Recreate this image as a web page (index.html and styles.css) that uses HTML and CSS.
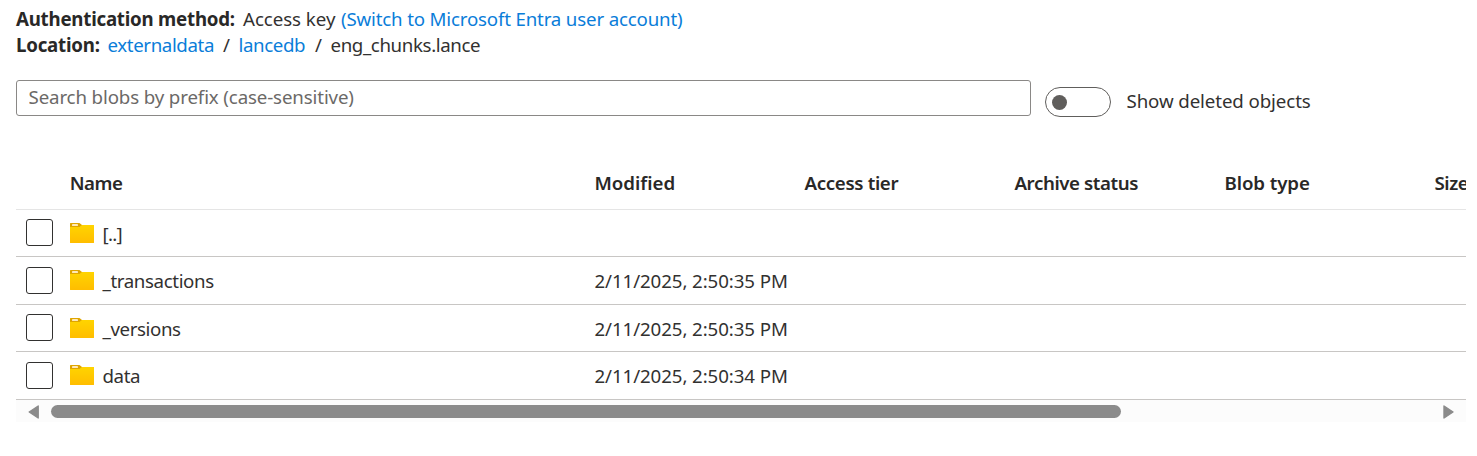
FILE: index.html
```html
<!DOCTYPE html>
<html lang="en">
<head>
<meta charset="utf-8">
<title>eng_chunks.lance</title>
<link rel="stylesheet" href="styles.css">
</head>
<body>
<svg class="defs" width="0" height="0">
  <defs>
    <linearGradient id="folder-fill" x1="0" y1="0" x2="0" y2="1"><stop offset="0" stop-color="#ffd400"/><stop offset="1" stop-color="#ffbd00"/></linearGradient>
    <symbol id="folder" viewBox="0 0 24 20">
      <path d="M0 .6Q0 0 .6 0H9.2Q10 0 10.4.7L12 2V3L10 4.5H0Z" fill="#dfa500"/>
      <path d="M0 4H9.5L12 2H24V19.4Q24 20 23.4 20H.6Q0 20 0 19.4Z" fill="url(#folder-fill)"/>
      <rect x="2" y="1" width="6" height="2" rx=".4" fill="#ffe9b8"/>
    </symbol>
  </defs>
</svg>
<main class="page">
  <section class="context">
    <div class="line"><b class="label auth">Authentication method:</b><span class="access">Access key</span><a class="link switch">(Switch to Microsoft Entra user account)</a></div>
    <div class="line"><b class="label loc">Location:</b><a class="link container">externaldata</a><span class="sep">/</span><a class="link folder-link">lancedb</a><span class="sep">/</span><span class="current">eng_chunks.lance</span></div>
  </section>
  <div class="tools">
    <input class="search" type="text" placeholder="Search blobs by prefix (case-sensitive)">
    <span class="toggle"><span class="knob"></span></span>
    <span class="toggle-label">Show deleted objects</span>
  </div>
  <div class="grid">
    <div class="row head"><span></span><span>Name</span><span class="modified">Modified</span><span class="tier">Access tier</span><span>Archive status</span><span class="type">Blob type</span><span>Size</span></div>
    <div class="row"><span class="check"></span><span class="name"><svg class="icon"><use href="#folder"/></svg><span class="up">[..]</span></span></div>
    <div class="row tall"><span class="check"></span><span class="name"><svg class="icon"><use href="#folder"/></svg><span>_transactions</span></span><span class="date">2/11/2025, 2:50:35 PM</span></div>
    <div class="row"><span class="check"></span><span class="name"><svg class="icon"><use href="#folder"/></svg><span>_versions</span></span><span class="date">2/11/2025, 2:50:35 PM</span></div>
    <div class="row tall"><span class="check"></span><span class="name"><svg class="icon"><use href="#folder"/></svg><span>data</span></span><span class="date">2/11/2025, 2:50:34 PM</span></div>
    <div class="scrollbar">
      <svg class="arrow" viewBox="0 0 12 14"><path d="M10.2 1V13L1.2 7Z"/></svg>
      <span class="track"><span class="thumb"></span></span>
      <svg class="arrow" viewBox="0 0 12 14"><path d="M1 1V13L10 7Z"/></svg>
    </div>
  </div>
</main>
</body>
</html>
```
FILE: styles.css
```css
* { box-sizing: border-box; }
body { margin: 0; background: #fff; color: #323130; font: 18.7px/26px "Noto Sans", sans-serif; letter-spacing: -0.38px; overflow: hidden; }
.defs { display: block; }
.page { width: 1466px; padding: 6px 0 0 16px; }
.line { display: flex; height: 26px; white-space: pre; }
.label { color: #292827; font-weight: 700; margin-right: 8px; letter-spacing: -0.23px; }
.auth { width: 219px; }
.access { width: 98px; letter-spacing: -0.05px; }
.switch { letter-spacing: -0.17px; }
.loc { width: 83.5px; }
.container { width: 106.5px; }
.folder-link { width: 67.5px; }
.sep { width: 24.5px; text-align: center; }
.link { color: #0a7dd9; }
.tools { display: flex; height: 37px; margin-top: 22px; }
.search { width: 1015px; height: 36px; padding: 0 11.5px 4px; border: 1px solid #8a8886; border-radius: 3px; font: inherit; letter-spacing: -0.13px; outline: 0; }
.search::placeholder { color: #6b6967; opacity: 1; }
.toggle { display: flex; align-items: center; width: 66px; height: 30px; margin: 7px 0 0 14px; padding-left: 6px; border: 1px solid #605e5c; border-radius: 15px; }
.knob { width: 15px; height: 15px; border-radius: 50%; background: #605e5c; }
.toggle-label { margin: 8px 0 0 15.5px; letter-spacing: -0.1px; }
.grid { width: 1450px; margin-top: 40px; overflow: hidden; }
.row { display: grid; grid-template-columns: 53.7px 524.8px 210px 210px 210px 210px 80px; align-items: center; height: 47px; border-bottom: 1px solid #c8c6c4; white-space: nowrap; }
.tall { height: 48px; }
.head { height: 53px; color: #292827; font-weight: 600; letter-spacing: -0.42px; border-color: #e5e5e5; }
.modified { letter-spacing: -0.02px; }
.tier { letter-spacing: -0.34px; }
.type { letter-spacing: -0.1px; }
.check { width: 27px; height: 27px; margin: 0 0 1px 10px; border: 1px solid #323130; border-radius: 3px; }
.name { display: flex; align-items: center; gap: 8.8px; }
.icon { width: 24px; height: 20px; }
.row:not(.tall) .name span { padding-top: 1px; }
.row:not(.tall) .name { height: 26px; }
.row:not(.tall) .date { padding-top: 1px; }
.tall .icon { margin-bottom: 1px; }
.up { letter-spacing: -0.7px; }
.date { letter-spacing: -0.09px; }
.scrollbar { display: flex; align-items: center; height: 22px; padding: 0 11px 0 12px; background: #fcfcfc; }
.arrow { width: 12px; height: 14px; margin-top: 2px; fill: #8b8b8b; stroke: #8b8b8b; stroke-width: 1.4; stroke-linejoin: round; }
.track { flex: 1; padding-left: 11px; }
.thumb { display: block; width: 1070px; height: 13px; border-radius: 7px; background: #8b8b8b; }
```
